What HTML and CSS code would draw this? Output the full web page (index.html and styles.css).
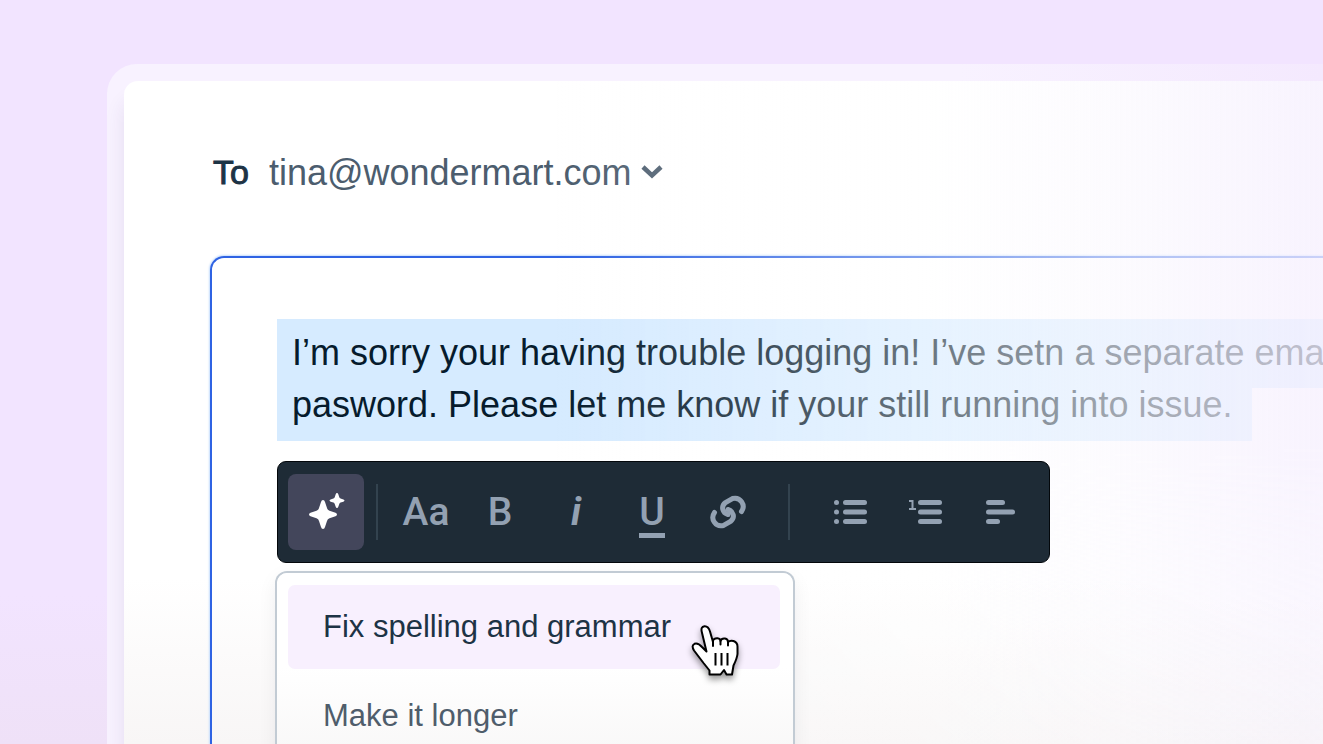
FILE: index.html
```html
<!DOCTYPE html>
<html lang="en">
<head>
<meta charset="utf-8">
<meta name="viewport" content="width=device-width, initial-scale=1">
<title>Compose email</title>
<link rel="stylesheet" href="styles.css">
</head>
<body>
<main class="scene">
  <div class="frame">
    <section class="window">
      <div class="recipient">
        <label class="recipient-label" for="to">To</label>
        <select class="recipient-select" id="to"><option>tina@wondermart.com</option></select>
        <svg class="caret" width="22" height="16" viewBox="0 0 22 16" aria-hidden="true"><path d="M2 3 11 11.500 20 3" fill="none" stroke="currentColor" stroke-width="4.500"/></svg>
      </div>
      <div class="composer">
        <textarea class="message" aria-label="Message" wrap="off" spellcheck="false">I’m sorry your having trouble logging in! I’ve setn a separate email
pasword. Please let me know if your still running into issue.</textarea>
        <div class="toolbar" role="toolbar" aria-label="Formatting">
          <button class="tool tool-ai" type="button" aria-label="AI assist">
            <svg width="40" height="40" viewBox="0 0 40 40" fill="#fff" aria-hidden="true">
              <path d="M17 8Q18.500 8 19 10L21 16Q21.500 18 23.500 18.700L29.500 20.700Q31 21.300 31 22.500Q31 23.700 29.500 24.300L23.500 26.300Q21.500 27 21 29L19 35Q18.500 37 17 37Q15.500 37 15 35L13 29Q12.500 27 10.500 26.300L4.500 24.300Q3 23.700 3 22.500Q3 21.300 4.500 20.700L10.500 18.700Q12.500 18 13 16L15 10Q15.500 8 17 8Z"/>
              <path d="M31 1Q31.900 1 32.300 2.300L33.300 5.200Q33.600 6.200 34.600 6.600L37.400 7.500Q38.500 8 38.500 8.600Q38.500 9.200 37.400 9.700L34.600 10.600Q33.600 11 33.300 12L32.300 14.800Q31.900 16 31 16Q30.100 16 29.700 14.800L28.700 12Q28.400 11 27.400 10.600L24.600 9.700Q23.500 9.200 23.500 8.600Q23.500 8 24.600 7.500L27.400 6.600Q28.400 6.200 28.700 5.200L29.700 2.300Q30.100 1 31 1Z"/>
            </svg>
          </button>
          <span class="divider"></span>
          <button class="tool tool-font" type="button" aria-label="Text style">Aa</button>
          <button class="tool" type="button" aria-label="Bold">B</button>
          <button class="tool tool-italic" type="button" aria-label="Italic">i</button>
          <button class="tool" type="button" aria-label="Underline"><span class="underlined">U</span></button>
          <button class="tool" type="button" aria-label="Link">
            <svg width="36" height="36" viewBox="0 0 36 36" fill="none" stroke="currentColor" stroke-width="5" stroke-linecap="round" aria-hidden="true">
              <path d="M31.500 17.500C36 11 30.500 2.500 22.500 4.500L15.500 8.500C10.500 12.500 12.500 19 18 20.500"/>
              <path d="M4.500 18.500C0 25 5.500 33.500 13.500 31.500L20.500 27.500C25.500 23.500 23.500 17 18 15.500"/>
            </svg>
          </button>
          <span class="divider divider-wide"></span>
          <button class="tool" type="button" aria-label="Bulleted list">
            <svg width="36" height="36" viewBox="0 0 36 36" fill="currentColor" aria-hidden="true">
              <circle cx="4.500" cy="8.500" r="2.500"/><circle cx="4.500" cy="18" r="2.500"/><circle cx="4.500" cy="27.500" r="2.500"/>
              <rect x="11" y="6" width="24" height="5" rx="2.500"/><rect x="11" y="15.500" width="24" height="5" rx="2.500"/><rect x="11" y="25" width="24" height="5" rx="2.500"/>
            </svg>
          </button>
          <button class="tool" type="button" aria-label="Numbered list">
            <svg width="36" height="36" viewBox="0 0 36 36" fill="currentColor" aria-hidden="true">
              <path d="M1 7H4.500V15M1 15H8" fill="none" stroke="currentColor" stroke-width="2"/>
              <rect x="10" y="6" width="24" height="5" rx="2.500"/><rect x="10" y="15.500" width="24" height="5" rx="2.500"/><rect x="10" y="25" width="24" height="5" rx="2.500"/>
            </svg>
          </button>
          <button class="tool" type="button" aria-label="Align left">
            <svg width="36" height="36" viewBox="0 0 36 36" fill="currentColor" aria-hidden="true">
              <rect x="2" y="6" width="19" height="5" rx="2.500"/><rect x="2" y="15.500" width="29" height="5" rx="2.500"/><rect x="2" y="25" width="14" height="5" rx="2.500"/>
            </svg>
          </button>
        </div>
        <div class="menu" role="menu">
          <button class="menu-item menu-item-active" type="button" role="menuitem">Fix spelling and grammar</button>
          <button class="menu-item" type="button" role="menuitem">Make it longer</button>
          <svg class="pointer" width="60" height="65" viewBox="0 0 60 65" aria-hidden="true">
            <path d="M24.500 54.500V50.500L18.500 43 9 30.500Q6 25.500 9.500 23.800Q13 22.500 17 27L21.500 31.500 16.800 12Q15.500 6.800 19.500 6.200Q23.500 6 25 11.500L28 22V20.500Q29 18 32.500 18.200Q35.500 18.500 35.500 21Q36.500 18 40 18.500Q43 19 43 22Q45 20 48.500 21Q52.500 22.500 52.500 26.500V34Q52 38.500 48.500 45.500L47 54.500H41.500L39 50 35.500 54.500Z" fill="#fff" stroke="#000" stroke-width="2" stroke-linejoin="round"/>
            <path d="M28 22V26M35.500 21V24.500M43 22V25.500" fill="none" stroke="#000" stroke-width="2" stroke-linecap="round"/>
            <path d="M30.500 33V45.500M36.500 33V45.500M42.500 33V45.500" stroke="#000" stroke-width="2"/>
          </svg>
        </div>
      </div>
    </section>
  </div>
</main>
</body>
</html>
```
FILE: styles.css
```css
* { box-sizing: border-box; }

body {
  margin: 0;
  font-family: "Liberation Sans", Arial, sans-serif;
  color: #1d3345;
}

button, select, textarea { font-family: inherit; }

.scene {
  position: relative;
  display: flex;
  height: 100vh;
  padding: 64px 0 0 107px;
  overflow: hidden;
  background: linear-gradient(#f2e4ff 80%, #efe1f7);
}

.frame {
  flex: 1;
  min-width: 0;
  padding: 17px 0 0 17px;
  border-radius: 30px 0 0 0;
  background: linear-gradient(90deg, #f8f2ff 70%, #f4e9fe);
}

.window {
  position: relative;
  display: flex;
  flex-direction: column;
  gap: 58px;
  height: 100%;
  padding: 65px 0 0 86px;
  border-radius: 14px 0 0 0;
  background: linear-gradient(#fff 75%, #f8f6f6);
  box-shadow: 0 20px 20px rgba(60, 40, 110, 0.1);
}

/* Fades the draft out towards the right edge, below the toolbar and menu. */
.window::after {
  content: "";
  position: absolute;
  inset: 0;
  pointer-events: none;
  background: linear-gradient(90deg, rgba(255, 255, 255, 0) 36%, rgba(255, 255, 255, 0.4) 67%, rgba(251, 249, 254, 0.62) 82%, rgba(246, 240, 254, 0.78) 100%);
  mask-image: linear-gradient(#000 55%, rgba(0, 0, 0, 0.5));
}

.recipient {
  display: flex;
  align-items: center;
  height: 52px;
  padding-left: 3px;
  font-size: 34px;
}

.recipient-label {
  margin-right: 20px;
  -webkit-text-stroke: 1px currentColor;
}

.recipient-select {
  appearance: none;
  margin-right: 9px;
  padding: 0;
  border: 0;
  background: none;
  color: #4c5d6e;
  font-size: 36px;
}

.caret { color: #4c5d6e; }

.composer {
  flex: 1;
  min-height: 0;
  padding: 61px 0 0 65px;
  border: 2px solid #2f63e3;
  border-width: 2px 0 0 2px;
  border-radius: 14px 0 0 0;
  box-shadow: 0 0 2px 1px #c5ddfc;
}

.message {
  display: block;
  width: 100%;
  height: 122px;
  margin-bottom: 20px;
  padding: 8px 15px;
  border: 0;
  outline: 0;
  resize: none;
  overflow: hidden;
  white-space: pre;
  color: #061b2d;
  font-size: 36px;
  line-height: 52px;
  background:
    linear-gradient(#d6ebff, #d6ebff) 0 0 / 100% 69px no-repeat,
    linear-gradient(#d6ebff, #d6ebff) 0 0 / 975px 100% no-repeat;
}

.toolbar {
  position: relative;
  z-index: 1;
  display: flex;
  align-items: center;
  width: 773px;
  height: 102px;
  margin-bottom: 10px;
  padding-left: 10px;
  border: 1px solid #03070b;
  border-radius: 9px;
  background: #1e2b36;
}

.tool {
  display: flex;
  justify-content: center;
  align-items: center;
  flex: none;
  width: 76px;
  height: 76px;
  padding: 0;
  border: 0;
  border-radius: 8px;
  background: none;
  color: #93a1b2;
  font-family: Roboto, sans-serif;
  font-size: 39px;
  font-weight: 500;
  line-height: 44px;
}

.tool-ai { background: #43465b; }
.tool-font { width: 72px; }
.tool-italic { font-style: italic; font-weight: 700; }

.underlined {
  height: 48px;
  margin-top: 4px;
  border-bottom: 5px solid currentColor;
}

.divider {
  flex: none;
  width: 2px;
  height: 56px;
  margin: 0 12px;
  background: #33434f;
}

.divider-wide { margin: 0 22px; }

.menu {
  position: relative;
  z-index: 1;
  display: flex;
  flex-direction: column;
  gap: 5px;
  width: 516px;
  padding: 12px 13px 24px 11px;
  border-radius: 10px;
  background: linear-gradient(#fff 45%, #f8f7f7 90%);
  box-shadow: 0 0 0 2px #c2cbd4, 0 6px 20px rgba(20, 30, 50, 0.08);
}

.menu-item {
  height: 84px;
  padding: 0 35px;
  border: 0;
  border-radius: 7px;
  background: none;
  color: #4f5d6b;
  font-size: 31px;
  text-align: left;
}

.menu-item-active {
  background: #f8f0fe;
  color: #1d3345;
}

.pointer {
  position: absolute;
  top: 47px;
  right: 48px;
  filter: drop-shadow(0 4px 3px rgba(0, 0, 0, 0.4));
}
```
